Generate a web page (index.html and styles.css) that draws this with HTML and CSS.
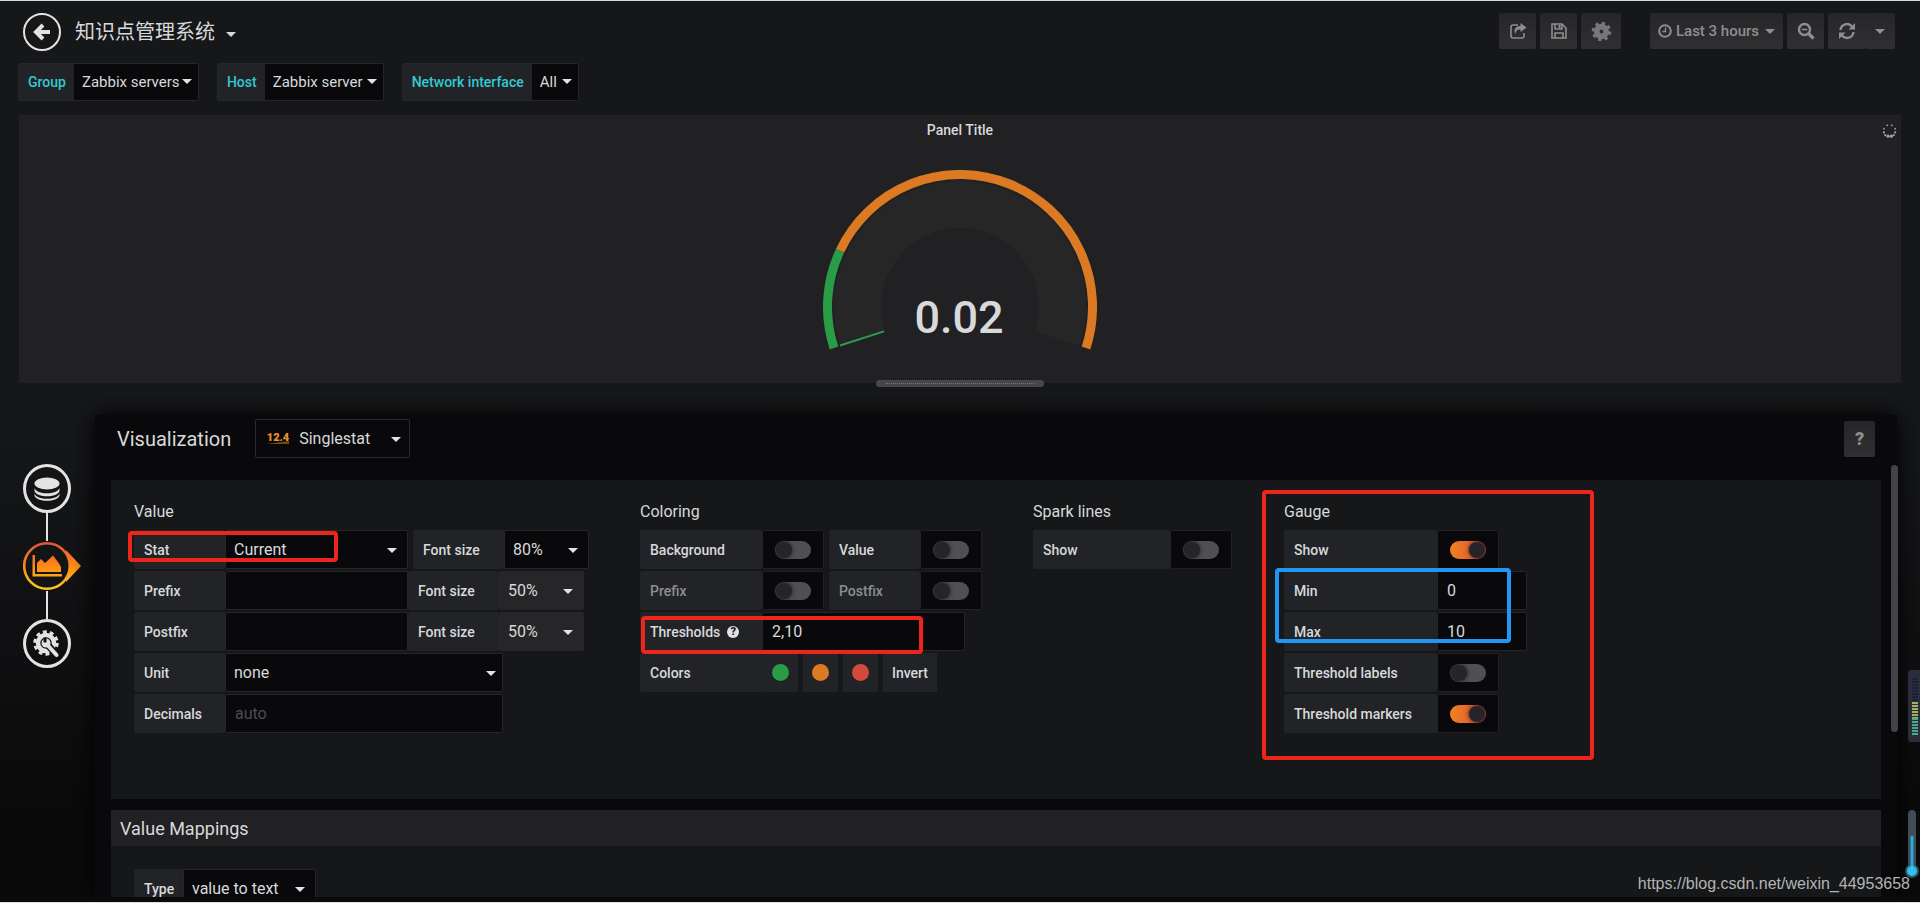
FILE: index.html
```html
<!DOCTYPE html>
<html lang="zh-CN">
<head>
<meta charset="utf-8">
<title>知识点管理系统</title>
<link rel="stylesheet" href="styles.css">
</head>
<body>
<header class="navbar">
  <button class="back" aria-label="Back"><svg viewBox="0 0 20 20" width="20" height="20"><path d="M11 3 4 10l7 7M5 10h13" fill="none" stroke="currentColor" stroke-width="4"/></svg></button>
  <button class="dash-title">知识点管理系统<span class="caret"></span></button>
  <div class="actions">
    <button class="btn" aria-label="Share"><svg viewBox="0 0 18 18" width="18" height="18"><path d="M9 3H4a2 2 0 0 0-2 2v9a2 2 0 0 0 2 2h9a2 2 0 0 0 2-2v-3" fill="none" stroke="currentColor" stroke-width="1.600"/><path d="M11.500 1 17.500 5.500 11.500 10V7.500C8 7.500 6.500 9 6.500 12.500 4 8 6.500 4 11.500 4Z" fill="currentColor"/></svg></button>
    <button class="btn btn-save" aria-label="Save"><svg viewBox="0 0 18 18" width="18" height="18"><path d="M2 2h10l4 4v10H2Z" fill="none" stroke="currentColor" stroke-width="1.600"/><path d="M5 2v5h7V2M5 16v-5h8v5" fill="none" stroke="currentColor" stroke-width="1.600"/><path d="M8.500 3h2v3h-2z" fill="currentColor"/></svg></button>
    <button class="btn btn-gear" aria-label="Settings"><svg viewBox="0 0 22 22" width="21" height="21"><circle cx="11" cy="11" r="5" fill="none" stroke="currentColor" stroke-width="6"/><circle cx="11" cy="11" r="8.500" fill="none" stroke="currentColor" stroke-width="3.500" stroke-dasharray="3.340 3.336"/></svg></button>
    <button class="btn btn-time"><svg viewBox="0 0 14 14" width="14" height="14"><circle cx="7" cy="7" r="5.800" fill="none" stroke="currentColor" stroke-width="2"/><path d="M7.500 3.500V7.500H4.500" fill="none" stroke="currentColor" stroke-width="1.300"/></svg>Last 3 hours<span class="caret"></span></button>
    <button class="btn" aria-label="Zoom out"><svg viewBox="0 0 18 18" width="18" height="18"><circle cx="7.500" cy="7.500" r="5.500" fill="none" stroke="currentColor" stroke-width="2.400"/><path d="M4.800 7.500h5.400" stroke="currentColor" stroke-width="1.600"/><path d="m11.500 11.500 5 5" stroke="currentColor" stroke-width="3.200"/></svg></button>
    <div class="btn-group">
      <button class="btn" aria-label="Refresh"><svg viewBox="0 0 18 18" width="18" height="18"><path d="M2.500 8A6.500 6.500 0 0 1 14 4.500M15.500 10A6.500 6.500 0 0 1 4 13.500" fill="none" stroke="currentColor" stroke-width="2.400"/><path d="M17 1v6.500h-6.500ZM1 17v-6.500h6.500Z" fill="currentColor"/></svg></button>
      <button class="btn btn-interval" aria-label="Refresh interval"><span class="caret"></span></button>
    </div>
  </div>
</header>

<nav class="variables">
  <div class="variable"><label for="v-group">Group</label><div class="pick pick-group"><select id="v-group"><option>Zabbix servers</option></select></div></div>
  <div class="variable"><label for="v-host">Host</label><div class="pick pick-host"><select id="v-host"><option>Zabbix server</option></select></div></div>
  <div class="variable"><label for="v-net">Network interface</label><div class="pick pick-net"><select id="v-net"><option>All</option></select></div></div>
</nav>

<section class="panel">
  <h2 class="panel-title">Panel Title</h2>
  <svg class="spinner" viewBox="0 0 16 16" width="15" height="15"><g fill="#a0a0a4"><circle cx="5.500" cy="2.500" r="1"/><circle cx="10.500" cy="2.500" r="1"/><circle cx="14" cy="6" r="1"/><circle cx="14" cy="10" r="1.200"/><circle cx="2" cy="6" r="1"/><circle cx="2" cy="10" r="1.200"/><circle cx="3.500" cy="13" r="1.200"/><circle cx="12.500" cy="13" r="1.200"/><circle cx="6.500" cy="14" r="1.700"/><circle cx="10" cy="14" r="1.700"/></g></svg>
  <svg class="gauge" viewBox="0 0 274 190" width="274" height="190">
    <path d="M39.500 168.700A102.500 102.500 0 1 1 234.500 168.700" fill="none" stroke="#262626" stroke-width="47"/>
    <path d="M11 178A132.500 132.500 0 0 1 17.100 80.600" fill="none" stroke="#299c46" stroke-width="9"/>
    <path d="M17.100 80.600A132.500 132.500 0 0 1 263 178" fill="none" stroke="#dc7923" stroke-width="9"/>
    <path d="M17 175.500 61 161.400" stroke="#2f9a54" stroke-width="2"/>
    <text x="136" y="163" class="gauge-value">0.02</text>
  </svg>
  <div class="resize"></div>
</section>

<main class="editor">
  <nav class="tabs">
    <button class="tab" aria-label="Queries"><svg viewBox="0 0 28 28" width="28" height="28"><ellipse cx="14" cy="8.500" rx="12.500" ry="6" fill="currentColor"/><path d="M1.500 13c2 7 23 7 25 0v3c-2 7-23 7-25 0ZM1.500 18.500c2 7 23 7 25 0v2c-2 7-23 7-25 0Z" fill="currentColor"/></svg></button>
    <span class="link"></span>
    <button class="tab-active" aria-label="Visualization"><svg viewBox="0 0 58 50" width="58" height="50"><defs><linearGradient id="fire" x1="0" y1="0" x2="0" y2="50" gradientUnits="userSpaceOnUse"><stop offset="0" stop-color="#e0503f"/><stop offset=".5" stop-color="#fb8a17"/><stop offset="1" stop-color="#ffd01a"/></linearGradient></defs><g fill="url(#fire)"><path d="M43 9 58 25 43 41Z"/></g><circle cx="24" cy="25" r="22.800" fill="#131415" stroke="url(#fire)" stroke-width="2.600"/><g fill="url(#fire)"><path d="M9.500 14h2.500v19h27v2.500H9.500Z"/><path d="M14 31V22l4-4 4 4 8-7.500 6 8L38 26v5Z"/></g></svg></button>
    <span class="link"></span>
    <button class="tab" aria-label="General"><svg viewBox="0 0 28 28" width="28" height="28"><circle cx="13" cy="13" r="8" fill="none" stroke="currentColor" stroke-width="4.500"/><circle cx="13" cy="13" r="11.200" fill="none" stroke="currentColor" stroke-width="3" stroke-dasharray="3.900 3.140"/><path d="m14.500 14.500 9.500 11" stroke="#131415" stroke-width="7"/><circle cx="13" cy="13" r="4.500" fill="currentColor"/><path d="M12 7.500v5" stroke="#131415" stroke-width="3"/><path d="m14.500 15 9 10" stroke="currentColor" stroke-width="4" stroke-linecap="round"/></svg></button>
  </nav>

  <div class="pane">
    <div class="toolbar">
      <h1 class="toolbar-title">Visualization</h1>
      <div class="viz">
        <svg viewBox="0 0 24 20" width="24" height="20" aria-hidden="true"><text x="12" y="12" class="viz-num">12.4</text><path d="M0 15 23 12v3H0Z" fill="#6d4a19"/></svg>
        <select aria-label="Visualization type"><option>Singlestat</option></select>
      </div>
      <button class="btn help" aria-label="Help">?</button>
    </div>

    <div class="options">
      <section class="group group-value">
        <h3>Value</h3>
        <div class="row gapped">
          <div class="field"><label class="w-label" for="stat">Stat</label><div class="sel w-text"><select id="stat"><option>Current</option></select></div></div>
          <div class="field"><label class="w-label" for="fs1">Font size</label><div class="sel w-size"><select id="fs1"><option>80%</option></select></div></div>
        </div>
        <div class="row">
          <div class="field"><label class="w-label" for="prefix">Prefix</label><input class="w-text" id="prefix" type="text"></div>
          <div class="field"><label class="w-label" for="fs2">Font size</label><div class="sel w-size soft"><select id="fs2"><option>50%</option></select></div></div>
        </div>
        <div class="row">
          <div class="field"><label class="w-label" for="postfix">Postfix</label><input class="w-text" id="postfix" type="text"></div>
          <div class="field"><label class="w-label" for="fs3">Font size</label><div class="sel w-size soft"><select id="fs3"><option>50%</option></select></div></div>
        </div>
        <div class="row"><div class="field"><label class="w-label" for="unit">Unit</label><div class="sel tight w-wide"><select id="unit"><option>none</option></select></div></div></div>
        <div class="row"><div class="field"><label class="w-label" for="dec">Decimals</label><input class="w-wide" id="dec" type="text" placeholder="auto"></div></div>
        <i class="mark mark-stat"></i>
      </section>

      <section class="group group-coloring">
        <h3>Coloring</h3>
        <div class="row gapped">
          <div class="field"><label class="w-color" for="bg">Background</label><span class="toggle"><input id="bg" type="checkbox"></span></div>
          <div class="field"><label class="w-label" for="val">Value</label><span class="toggle"><input id="val" type="checkbox"></span></div>
        </div>
        <div class="row gapped">
          <div class="field"><label class="w-color dim" for="cpre">Prefix</label><span class="toggle"><input id="cpre" type="checkbox"></span></div>
          <div class="field"><label class="w-label dim" for="cpost">Postfix</label><span class="toggle"><input id="cpost" type="checkbox"></span></div>
        </div>
        <div class="row"><div class="field"><label class="w-color" for="thr">Thresholds<span class="tip">?</span></label><input class="w-thr" id="thr" type="text" value="2,10"></div></div>
        <div class="row gapped">
          <div class="field"><span class="name w-color">Colors</span><button class="swatch" aria-label="Color 1"><i class="dot green"></i></button></div>
          <button class="swatch" aria-label="Color 2"><i class="dot orange"></i></button>
          <button class="swatch" aria-label="Color 3"><i class="dot red"></i></button>
          <button class="invert">Invert</button>
        </div>
        <i class="mark mark-thr"></i>
      </section>

      <section class="group group-spark">
        <h3>Spark lines</h3>
        <div class="row"><div class="field"><label class="w-spark" for="spark">Show</label><span class="toggle"><input id="spark" type="checkbox"></span></div></div>
      </section>

      <section class="group">
        <h3>Gauge</h3>
        <div class="row"><div class="field"><label class="w-gauge" for="gshow">Show</label><span class="toggle"><input id="gshow" type="checkbox" checked></span></div></div>
        <div class="row"><div class="field"><label class="w-gauge" for="gmin">Min</label><input class="w-num" id="gmin" type="text" value="0"></div></div>
        <div class="row"><div class="field"><label class="w-gauge" for="gmax">Max</label><input class="w-num" id="gmax" type="text" value="10"></div></div>
        <div class="row"><div class="field"><label class="w-gauge" for="glab">Threshold labels</label><span class="toggle"><input id="glab" type="checkbox"></span></div></div>
        <div class="row"><div class="field"><label class="w-gauge" for="gmark">Threshold markers</label><span class="toggle"><input id="gmark" type="checkbox" checked></span></div></div>
        <i class="mark mark-gauge"></i>
        <i class="mark mark-range"></i>
      </section>
    </div>

    <section class="mappings">
      <h2>Value Mappings</h2>
      <div class="mappings-body"><div class="field"><label class="w-type" for="type">Type</label><div class="sel w-map"><select id="type"><option>value to text</option></select></div></div></div>
    </section>
    <i class="scroll"></i>
  </div>
</main>

<svg class="meter" viewBox="0 0 12 72" width="12" height="72"><rect width="16" height="72" rx="3" fill="#2b2c3c"/><path d="M7 8v24" stroke="#1c2236" stroke-width="6" stroke-dasharray="2 1"/><path d="M7 32v16" stroke="#a5b25a" stroke-width="6" stroke-dasharray="2 1"/><path d="M7 48v18" stroke="#49a98a" stroke-width="6" stroke-dasharray="2 1"/></svg>
<svg class="thermo" viewBox="0 0 14 68" width="14" height="68"><rect x="3" y="0" width="8" height="62" rx="4" fill="#414c58"/><circle cx="7" cy="61" r="7" fill="#2d5468"/><path d="M7 26v34" stroke="#29a8dc" stroke-width="3"/><circle cx="7" cy="61" r="5" fill="#35bdee"/></svg>
<p class="watermark">https://blog.csdn.net/weixin_44953658</p>
</body>
</html>
```

FILE: styles.css
```css
* { box-sizing: border-box; }
body {
  margin: 0;
  height: 100vh;
  display: flex;
  flex-direction: column;
  position: relative;
  overflow: hidden;
  border-top: 1px solid #d5dadb;
  border-bottom: 1px solid #e4e0e0;
  background: linear-gradient(#161719 0, #161719 45%, #0a0a0b 90%);
  color: #d8d9da;
  font: 14px/20px Roboto, "Noto Sans CJK SC", sans-serif;
}
h1, h2, h3, p { margin: 0; font-weight: 400; }
button, input, select { font: inherit; color: inherit; margin: 0; border: 0; padding: 0; }
button { background: none; }
svg { display: block; flex: none; }
.caret {
  width: 0;
  height: 0;
  border: 5px solid transparent;
  border-top-color: currentColor;
  border-bottom: 0;
}

.navbar { display: flex; align-items: center; padding: 12px 25px 0 23px; }
.back {
  display: flex; align-items: center; justify-content: center;
  width: 38px; height: 38px;
  border: 2px solid #e3e3e3; border-radius: 50%; color: #e3e3e3;
}
.dash-title { display: flex; align-items: center; gap: 11px; margin-left: 14px; font-size: 20px; line-height: 30px; }
.dash-title .caret { margin-top: 4px; }
.actions { display: flex; align-items: center; gap: 4px; height: 36px; margin: 0 0 2px auto; }
.btn {
  display: flex; align-items: center; justify-content: center;
  width: 37px; height: 36px;
  border-radius: 2px;
  background: linear-gradient(#262628, #303032);
  color: #8e8e90;
  font-weight: 500;
}
.btn-gear { width: 40px; color: #77777a; }
.btn-time { width: 133px; gap: 4px; margin-left: 25px; font-size: 15px; }
.btn-time .caret { margin-left: 2px; }
.btn-group { display: flex; }
.btn-interval { width: 30px; }

.variables { display: flex; gap: 18px; padding: 12px 18px 14px; }
.variable { display: flex; height: 38px; border: 1px solid #262628; border-radius: 2px; }
.variable label { display: flex; align-items: center; padding: 0 8px 0 9px; background: #212327; color: #33c9d2; font-weight: 500; }
.pick, .sel { position: relative; display: flex; background: #09090b; }
.pick::after, .sel::after {
  content: "";
  position: absolute;
  top: 50%; right: 6px;
  margin-top: -3px;
  border: 5px solid transparent;
  border-top-color: #e3e3e3;
  border-bottom: 0;
  pointer-events: none;
}
select { appearance: none; width: 100%; background: transparent; }
.pick select { padding-left: 8px; font-size: 15px; }
.pick-group { width: 124px; }
.pick-host { width: 118px; }
.pick-net { width: 46px; }

.panel { position: relative; display: flex; flex-direction: column; align-items: center; margin: 0 19px; height: 268px; flex: none; background: #212124; }
.panel-title { padding-top: 5px; font-size: 14px; font-weight: 500; }
.spinner { position: absolute; top: 8px; right: 4px; }
.gauge { margin-top: 30px; }
.gauge-value { font-size: 45px; font-weight: 500; text-anchor: middle; fill: #d8d9da; }
.resize { position: absolute; bottom: -4px; width: 168px; height: 7px; border-radius: 4px; background: #47474a; }
.resize::after { content: ""; position: absolute; top: 3px; left: 10px; right: 10px; border-top: 1px dotted #77777a; }

.editor { display: flex; flex: 1; min-height: 0; padding: 32px 23px 5px 23px; }
.tabs { display: flex; flex-direction: column; align-items: flex-start; width: 72px; padding-top: 49px; flex: none; }
.tab {
  display: flex; align-items: center; justify-content: center;
  width: 48px; height: 49px; flex: none;
  border: 3px solid #e3e3e3; border-radius: 50%; color: #e3e3e3;
}
.tab-active { width: 58px; height: 50px; flex: none; }
.link { width: 2px; height: 28px; flex: none; margin-left: 23px; background: #e3e3e3; }

.pane { position: relative; flex: 1; min-width: 0; display: flex; flex-direction: column; padding: 0 16px; background: #09090b; box-shadow: 0 0 20px #000; clip-path: inset(-20px -20px 0 -20px); }
.toolbar { display: flex; align-items: center; height: 47px; flex: none; padding: 0 6px; }
.toolbar-title { font-size: 20px; }
.viz { position: relative; display: flex; align-items: center; gap: 9px; width: 155px; height: 39px; margin-left: 24px; padding-left: 10px; border: 1px solid #2b2b2e; border-radius: 2px; font-size: 16px; }
.viz select { height: 36px; }
.viz::after { content: ""; position: absolute; right: 8px; top: 17px; border: 5px solid transparent; border-top-color: #e3e3e3; border-bottom: 0; }
.viz-num { font-size: 11px; font-weight: 900; text-anchor: middle; fill: #f0912c; }
.help { width: 31px; margin-left: auto; font-size: 18px; font-weight: 900; }

.options { display: flex; height: 319px; flex: none; margin-top: 18px; padding: 22px 23px; background: #161719; }
.group { position: relative; display: flex; flex-direction: column; gap: 2px; flex: none; }
.group-value { width: 506px; }
.group-coloring { width: 393px; }
.group-spark { width: 251px; }
h3 { font-size: 16px; padding-bottom: 6px; }
.row { display: flex; }
.gapped { gap: 5px; }
.field { display: flex; height: 39px; }
.field label, .name { display: flex; align-items: center; padding-left: 10px; border-radius: 2px; background: #212327; font-weight: 500; }
.field .dim { color: #8e8e90; }
.field input[type="text"], .sel { border: 1px solid #262628; border-radius: 2px; background: #09090b; font-size: 16px; }
.field input[type="text"] { padding: 0 9px; }
.field input::placeholder { color: #4c4c50; }
.sel::after { right: 10px; margin-top: -2px; }
.tight::after { right: 6px; }
.sel select { padding-left: 8px; }
.field .soft { background: #262628; }
.w-label { width: 91px; }
.w-text { width: 183px; }
.w-size { width: 85px; }
.w-wide { width: 278px; }
.w-color { width: 122px; }
.w-thr { width: 203px; }
.w-spark { width: 137px; }
.w-gauge { width: 153px; }
.w-num { width: 90px; }
.w-type { width: 49px; }
.w-map { width: 133px; }
.toggle { display: flex; align-items: center; justify-content: center; width: 62px; border: 1px solid #212124; border-radius: 2px; background: #09090b; }
.toggle input { appearance: none; width: 36px; height: 18px; border-radius: 9px; background: #505052; }
.toggle input::before { content: ""; display: block; width: 16px; height: 16px; margin: 1px; border-radius: 50%; background: #252527; box-shadow: 0 0 4px #19191b; }
.toggle input:checked { background: linear-gradient(90deg, #f08220, #e4632f 60%, #d6415f); }
.toggle input:checked::before { margin-left: 19px; }
.tip { display: flex; align-items: center; justify-content: center; width: 12px; height: 12px; margin-left: 7px; border-radius: 50%; background: #e3e3e3; color: #212124; font-size: 11px; line-height: 12px; font-weight: 900; }
.swatch { display: flex; align-items: center; justify-content: center; width: 36px; height: 39px; background: #212327; }
.row > .swatch + .swatch, .row > .field + .swatch { width: 35px; }
.dot { width: 17px; height: 17px; border-radius: 50%; }
.green { background: #299c46; }
.orange { background: #dc7923; }
.red { background: #d44a3a; }
.invert { width: 54px; height: 39px; background: #212327; font-weight: 500; }

.mark { position: absolute; border: 4px solid #ee251b; border-radius: 4px; }
.mark-stat { left: -6px; top: 29px; width: 210px; height: 31px; }
.mark-thr { left: 1px; top: 114px; width: 282px; height: 38px; }
.mark-gauge { left: -22px; top: -12px; width: 332px; height: 270px; }
.mark-range { left: -9px; top: 66px; width: 236px; height: 75px; border-color: #2196f3; }

.mappings { flex: 1; min-height: 0; overflow: hidden; margin-top: 11px; background: #161719; }
.mappings h2 { padding: 9px 9px 7px; background: #212124; font-size: 18px; }
.mappings-body { padding: 23px; }
.scroll { position: absolute; top: 50px; right: -1px; width: 7px; height: 267px; border-radius: 4px; background: #42424b; }

.meter { position: absolute; right: 0; bottom: 160px; }
.thermo { position: absolute; right: 1px; bottom: 24px; }
.watermark { position: absolute; right: 10px; bottom: 8px; color: #b4b4b5; font: 16px/20px "Liberation Sans", sans-serif; }
```
